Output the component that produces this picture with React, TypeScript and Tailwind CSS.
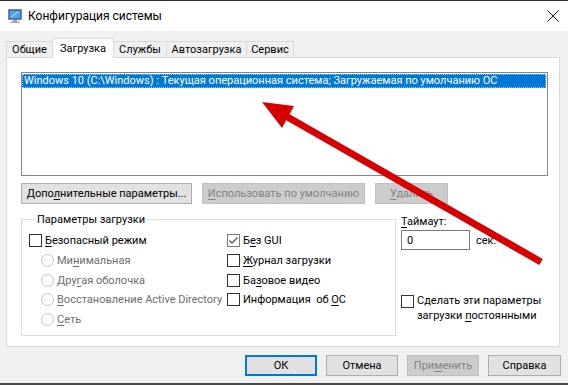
import React from "react";

// Окно «Конфигурация системы» (msconfig), вкладка «Загрузка»

function U({ children }: { children: React.ReactNode }) {
  return <span className="underline underline-offset-[2px] decoration-1">{children}</span>;
}

function Check({ checked, soft }: { checked?: boolean; soft?: boolean }) {
  return (
    <span
      className={
        soft
          ? "w-[13px] h-[13px] shrink-0 border border-[#7a7a7a] bg-white flex items-center justify-center"
          : "w-[13px] h-[13px] shrink-0 border border-[#333333] bg-white flex items-center justify-center"
      }
    >
      {checked && (
        <svg width="11" height="11" viewBox="0 0 11 11">
          <path d="M1.5 5.5 L4 8 L9.5 2.5" fill="none" stroke="#555555" strokeWidth="1.3" />
        </svg>
      )}
    </span>
  );
}

function Radio() {
  return <span className="w-[13px] h-[13px] shrink-0 rounded-full border border-[#c4c4c4] bg-white" />;
}

function Tab({ label, active, className }: { label: string; active?: boolean; className: string }) {
  return (
    <div
      className={
        active
          ? `h-[20px] bg-white border-l border-t border-r border-[#d9d9d9] flex items-start justify-center pt-[2px] relative z-10 ${className}`
          : `h-[17px] bg-[#f0f0f0] border border-[#d9d9d9] flex items-center justify-center ${className}`
      }
    >
      {label}
    </div>
  );
}

function TitleIcon() {
  return (
    <svg width="16" height="16" viewBox="0 0 16 16" className="shrink-0">
      <rect x="1.5" y="1.5" width="13" height="10" fill="#2b73c8" stroke="#7d8a99" />
      <rect x="3" y="3" width="10" height="7" fill="#4fa3ef" />
      <path d="M4 9 L11 4" stroke="#cfe6fb" strokeWidth="1" />
      <rect x="6" y="12" width="4" height="1.5" fill="#8a8f96" />
      <rect x="3.5" y="13.5" width="9" height="1.5" fill="#9aa0a6" />
    </svg>
  );
}

export default function App() {
  return (
    <div className="w-[568px] h-[385px] relative overflow-hidden bg-[#f0f0f0] text-[11px] leading-[15px] text-black whitespace-nowrap font-['Roboto','Liberation_Sans',sans-serif] flex flex-col">
      <div className="h-px bg-[#2e2e2e] shrink-0" />

      {/* заголовок */}
      <div className="h-[30px] bg-white flex items-center pl-[7px] pr-[9px] shrink-0">
        <TitleIcon />
        <span className="ml-[5px] text-[12px]">Конфигурация системы</span>
        <svg width="12" height="12" viewBox="0 0 12 12" className="ml-auto">
          <path d="M0.5 0.5 L11.5 11.5 M11.5 0.5 L0.5 11.5" stroke="#111" strokeWidth="1" />
        </svg>
      </div>

      {/* вкладки */}
      <div className="px-[6px] pt-[7px] shrink-0">
        <div className="flex items-end -mb-px">
          <Tab label="Общие" className="w-[47px]" />
          <Tab label="Загрузка" active className="w-[62px] -ml-px" />
          <Tab label="Службы" className="w-[54px] -ml-px" />
          <Tab label="Автозагрузка" className="w-[81px] -ml-px" />
          <Tab label="Сервис" className="w-[48px] -ml-px" />
        </div>

        <div className="h-[290px] w-[554px] bg-white border border-[#d9d9d9] pt-[14px] pl-[14px] pr-[11px]">
          {/* список ОС */}
          <div className="h-[104px] border border-[#828790] bg-white pt-px pr-px">
            <div className="h-[14px] bg-[#0078d7] text-white outline-1 outline-dotted outline-[#9fc4ea] -outline-offset-1 pl-[2px] leading-[14px]">
              Windows 10 (C:\Windows) : Текущая операционная система; Загружаемая по умолчанию ОС
            </div>
          </div>

          {/* кнопки */}
          <div className="flex gap-[10px] mt-[7px]">
            <div className="w-[171px] h-[21px] bg-[#e1e1e1] border border-[#adadad] flex items-center justify-center">
              <span>Допо<U>л</U>нительные параметры...</span>
            </div>
            <div className="w-[163px] h-[21px] bg-[#cccccc] border border-[#bfbfbf] text-[#838383] flex items-center justify-center">
              <span><U>И</U>спользовать по умолчанию</span>
            </div>
            <div className="w-[73px] h-[21px] bg-[#cccccc] border border-[#bfbfbf] text-[#838383] flex items-center justify-center">
              <span><U>У</U>далить</span>
            </div>
          </div>

          <div className="flex mt-[8px]">
            {/* параметры загрузки */}
            <fieldset className="w-[375px] h-[124px] shrink-0 border border-[#dcdcdc] pl-[7px] pt-[3px]">
              <legend className="ml-[6px] px-[2px]">Параметры загрузки</legend>
              <div className="flex">
                <div className="w-[198px] flex flex-col">
                  <div className="h-[20px] flex items-center gap-[3px]">
                    <Check />
                    <span><U>Б</U>езопасный режим</span>
                  </div>
                  <div className="h-[20px] flex items-center gap-[3px] pl-[12px] text-[#6d6d6d]">
                    <Radio />
                    <span>Ми<U>н</U>имальная</span>
                  </div>
                  <div className="h-[20px] flex items-center gap-[3px] pl-[12px] text-[#6d6d6d]">
                    <Radio />
                    <span>Дру<U>г</U>ая оболочка</span>
                  </div>
                  <div className="h-[19px] flex items-center gap-[3px] pl-[12px] text-[#6d6d6d]">
                    <Radio />
                    <span><U>В</U>осстановление Active Directory</span>
                  </div>
                  <div className="h-[20px] flex items-center gap-[3px] pl-[12px] text-[#6d6d6d]">
                    <Radio />
                    <span><U>С</U>еть</span>
                  </div>
                </div>
                <div className="flex flex-col">
                  <div className="h-[20px] flex items-center gap-[3px]">
                    <Check checked soft />
                    <span>Б<U>е</U>з GUI</span>
                  </div>
                  <div className="h-[20px] flex items-center gap-[3px]">
                    <Check />
                    <span><U>Ж</U>урнал загрузки</span>
                  </div>
                  <div className="h-[20px] flex items-center gap-[3px]">
                    <Check />
                    <span>Ба<U>з</U>овое видео</span>
                  </div>
                  <div className="h-[19px] flex items-center gap-[3px]">
                    <Check />
                    <span>Информация&nbsp; об <U>О</U>С</span>
                  </div>
                </div>
              </div>
            </fieldset>

            {/* таймаут */}
            <div className="ml-[5px] flex flex-col pt-[2px]">
              <span><U>Т</U>аймаут:</span>
              <div className="flex items-center mt-px">
                <div className="w-[69px] h-[20px] border border-[#7a7a7a] bg-white pl-[5px] flex items-center">0</div>
                <span className="ml-[6px]">сек.</span>
              </div>
              <div className="flex items-start gap-[3px] mt-[43px]">
                <span className="mt-[2px]"><Check /></span>
                <span>
                  Сделать эти параметры
                  <br />
                  загрузки <U>п</U>остоянными
                </span>
              </div>
            </div>
          </div>
        </div>
      </div>

      {/* нижние кнопки */}
      <div className="flex justify-end gap-[9px] pr-[7px] mt-[8px] shrink-0">
        <div className="w-[72px] h-[21px] bg-[#e1e1e1] border-2 border-[#0078d7] flex items-center justify-center">ОК</div>
        <div className="w-[72px] h-[21px] bg-[#e1e1e1] border border-[#adadad] flex items-center justify-center">Отмена</div>
        <div className="w-[72px] h-[21px] bg-[#cccccc] border border-[#bfbfbf] text-[#838383] flex items-center justify-center">
          <span>При<U>м</U>енить</span>
        </div>
        <div className="w-[73px] h-[21px] bg-[#e1e1e1] border border-[#adadad] flex items-center justify-center">Справка</div>
      </div>

      <div className="mt-auto h-[2px] bg-[#4a4a4a] shrink-0" />

      {/* красная стрелка поверх окна */}
      <svg className="absolute inset-0 pointer-events-none" width="568" height="385" viewBox="0 0 568 385">
        <line x1="541" y1="262" x2="284" y2="115" stroke="#d60000" strokeWidth="7" />
        <polygon points="262,102 294,106 282,128" fill="#d60000" />
      </svg>
    </div>
  );
}
